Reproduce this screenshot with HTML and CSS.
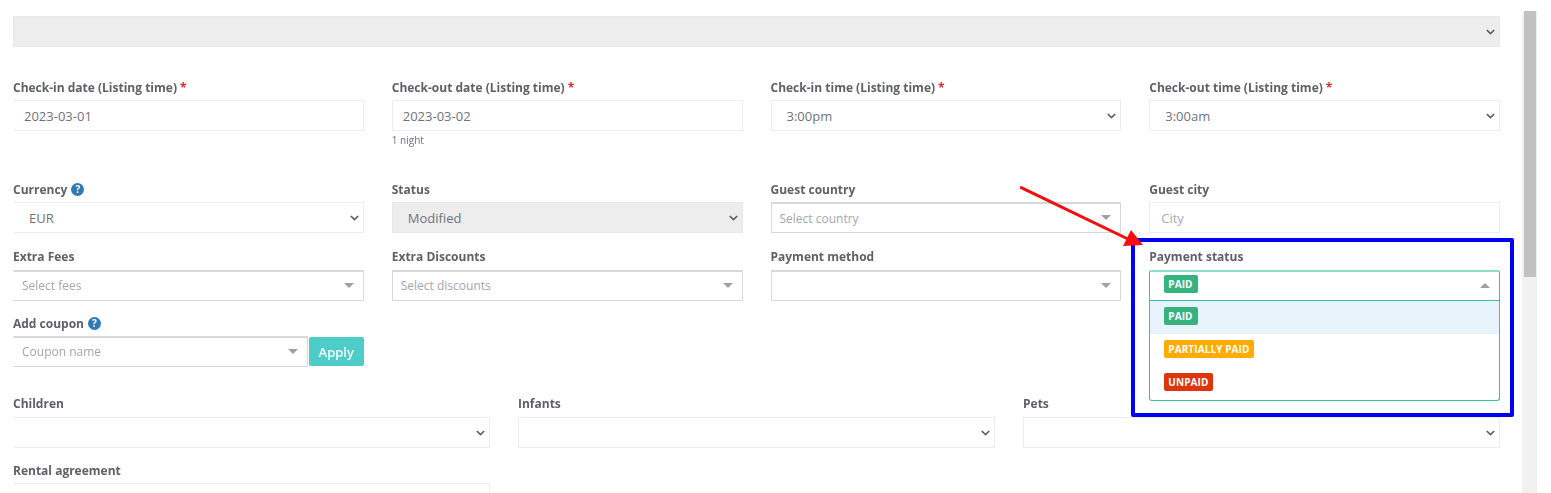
FILE: index.html
```html
<!DOCTYPE html>
<html lang="en">
<head>
<meta charset="utf-8">
<title>Reservation form</title>
<link rel="stylesheet" href="styles.css">
</head>
<body>
<svg width="0" height="0" class="defs">
  <defs>
    <symbol id="chev" viewBox="0 0 9 6"><path d="M.8 1 4.500 4.600 8.200 1" fill="none" stroke="#5c6064" stroke-width="1.700"/></symbol>
    <symbol id="tri" viewBox="0 0 10 5"><path d="M0 0H10L5 5Z" fill="#a0a0a0"/></symbol>
  </defs>
</svg>
<div class="page">
  <main class="form">
    <div class="field top-field">
      <div class="control disabled"><svg class="chev"><use href="#chev"/></svg></div>
    </div>

    <div class="row four row-dates">
      <div class="field"><label>Check-in date (Listing time) <em>*</em></label><div class="control text">2023-03-01</div></div>
      <div class="field"><label>Check-out date (Listing time) <em>*</em></label><div class="control text">2023-03-02</div><small>1 night</small></div>
      <div class="field"><label>Check-in time (Listing time) <em>*</em></label><div class="control sel">3:00pm<svg class="chev"><use href="#chev"/></svg></div></div>
      <div class="field"><label>Check-out time (Listing time) <em>*</em></label><div class="control sel">3:00am<svg class="chev"><use href="#chev"/></svg></div></div>
    </div>

    <div class="row four row-guest">
      <div class="field"><label>Currency <span class="help">?</span></label><div class="control sel">EUR<svg class="chev"><use href="#chev"/></svg></div></div>
      <div class="field"><label>Status</label><div class="control sel disabled">Modified<svg class="chev"><use href="#chev"/></svg></div></div>
      <div class="field"><label>Guest country</label><div class="control s2"><span class="ph">Select country</span><svg class="tri"><use href="#tri"/></svg></div></div>
      <div class="field"><label>Guest city</label><div class="control ph-input">City</div></div>
    </div>

    <div class="row four row-pay">
      <div class="field"><label>Extra Fees</label><div class="control s2"><span class="ph">Select fees</span><svg class="tri"><use href="#tri"/></svg></div></div>
      <div class="field"><label>Extra Discounts</label><div class="control s2"><span class="ph">Select discounts</span><svg class="tri"><use href="#tri"/></svg></div></div>
      <div class="field"><label>Payment method</label><div class="control s2"><svg class="tri"><use href="#tri"/></svg></div></div>
      <div class="field dropdown-field">
        <label>Payment status</label>
        <div class="control s2 open"><span class="badge paid">PAID</span><svg class="tri up"><use href="#tri"/></svg></div>
        <ul class="menu">
          <li class="active"><span class="badge paid">PAID</span></li>
          <li><span class="badge partial">PARTIALLY PAID</span></li>
          <li><span class="badge unpaid">UNPAID</span></li>
        </ul>
      </div>
    </div>

    <div class="row four row-coupon">
      <div class="field">
        <label>Add coupon <span class="help">?</span></label>
        <div class="coupon">
          <div class="control s2 coupon-input"><span class="ph">Coupon name</span><svg class="tri"><use href="#tri"/></svg></div>
          <button class="apply" type="button">Apply</button>
        </div>
      </div>
    </div>

    <div class="row three row-people">
      <div class="field"><label>Children</label><div class="control"><svg class="chev"><use href="#chev"/></svg></div></div>
      <div class="field"><label>Infants</label><div class="control"><svg class="chev"><use href="#chev"/></svg></div></div>
      <div class="field"><label>Pets</label><div class="control"><svg class="chev"><use href="#chev"/></svg></div></div>
    </div>

    <div class="row three row-rental">
      <div class="field"><label>Rental agreement</label><div class="control"></div></div>
    </div>
  </main>
  <div class="scrolltrack"><div class="scrollthumb"></div></div>
</div>

<div class="highlight"></div>
<svg class="arrow" viewBox="0 0 130 70" width="130" height="70">
  <path d="M0 1 110 54" class="arrow-line"/>
  <path d="M111 44 103 60 123 59Z" class="arrow-head"/>
</svg>
</body>
</html>
```
FILE: styles.css
```css
* { box-sizing: border-box; }
html, body { margin: 0; height: 493px; overflow: hidden; background: #fff; }
body { font-family: "Open Sans", sans-serif; font-size: 12px; color: #575962; position: relative; }
.defs { position: absolute; }
.page { display: flex; height: 493px; padding-left: 13px; filter: blur(.35px); }
.form { width: 1487px; padding-top: 16px; flex: none; }
.row { display: grid; column-gap: 28px; }
.four { grid-template-columns: repeat(4, 1fr); }
.three { grid-template-columns: repeat(3, 1fr); }
.top-field { height: 31px; }
.row-dates { margin-top: 32px; height: 102px; }
.row-guest { height: 67px; }
.row-pay { height: 67px; }
.row-coupon { height: 80px; }
.row-people { height: 67px; }
.field { min-width: 0; position: relative; }
label { display: flex; align-items: flex-start; gap: 3px; height: 21px; font-size: 12px; line-height: 17px; font-weight: 700; color: #5f6166; margin: 0; white-space: nowrap; }
.row-pay label, .row-people label { height: 22px; }
label em { color: #e02a2a; font-style: normal; }
.control { height: 31px; border: 1px solid #ebedf2; background: #fff; display: flex; align-items: center; position: relative; font-size: 13px; color: #6f727d; }
.row .field:first-child .control { border-left-color: transparent; }
.top-field .control { border-left-color: transparent; }
.control.text { padding-left: 10px; }
.control.sel { padding-left: 15px; }
.control.ph-input { color: #a9acb3; padding-left: 11px; }
.control.disabled { background: #ededed; border-color: #e8e8e8; }
.chev { position: absolute; right: 4px; top: 12px; width: 9px; height: 6px; }
.tri { position: absolute; right: 9px; top: 11px; width: 10px; height: 5px; }
.tri.up { transform: rotate(180deg); }
.control.s2 { border: 1px solid #d8d8d8; border-top-width: 2px; padding-left: 8px; font-size: 12px; border-radius: 1px; }
.row-pay .control.s2, .row-coupon .control.s2 { padding-bottom: 2px; }
.ph { color: #a3a6ad; }
small { display: block; font-size: 10px; line-height: 12px; margin-top: 3px; color: #6f727d; }
.help { display: inline-flex; align-items: center; justify-content: center; width: 13px; height: 13px; margin: 2px 0 0 1px; border-radius: 50%; background: #2f79b7; color: #fff; font-size: 10px; line-height: 13px; font-weight: 700; }
.coupon { display: flex; }
.coupon-input { flex: 1; min-width: 0; }
.apply { width: 55px; height: 29px; margin: 1px 0 0 1px; border: 0; border-radius: 2px; background: #4ecdc8; color: #fff; font: 600 13px "Open Sans", sans-serif; padding: 0; }
.row-pay .dropdown-field .control.open { border: 1px solid #2dc5a4; border-top: 2px solid #8fdccb; border-radius: 2px 2px 0 0; padding-left: 14px; padding-bottom: 4px; }
.menu { position: absolute; left: 0; right: 0; top: 53px; height: 100px; margin: 0; padding: 0; list-style: none; background: #fff; border: 1px solid #2dc5a4; border-top: 0; border-radius: 0 0 3px 3px; z-index: 2; }
.menu li { height: 33px; padding: 0 0 3px 14px; display: flex; align-items: center; }
.menu li.active { background: #e8f3fc; }
.badge { display: inline-block; height: 18.500px; line-height: 18.500px; padding: 0 5px 0 4px; font-size: 10px; letter-spacing: .1px; font-weight: 700; color: #fff; border-radius: 2px; white-space: nowrap; }
.paid { background: #36b37e; }
.partial { background: #ffab00; }
.unpaid { background: #de350b; }
.scrolltrack { width: 15px; margin: 11px 0 0 22px; padding: 0 1px 0 2px; background: #f1f1f1; flex: none; }
.scrollthumb { height: 266px; background: #c1c1c1; }
.highlight { position: absolute; left: 1131px; top: 238px; width: 383px; height: 179px; border: 4px solid #0000f5; border-radius: 2px; z-index: 3; pointer-events: none; }
.arrow { position: absolute; left: 1020px; top: 186px; z-index: 4; }
.arrow-line { stroke: #f60d0d; stroke-width: 3; fill: none; }
.arrow-head { fill: #f60d0d; }
```
